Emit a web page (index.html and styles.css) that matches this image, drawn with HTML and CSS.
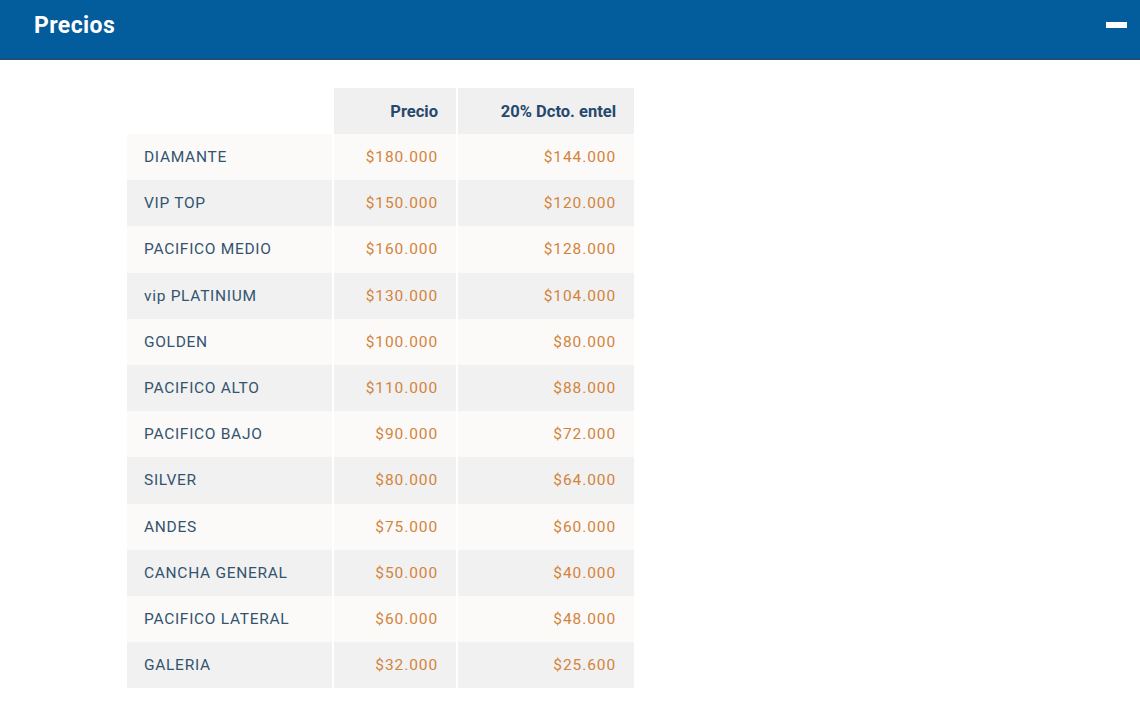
FILE: index.html
```html
<!DOCTYPE html>
<html lang="es">
<head>
<meta charset="utf-8">
<title>Precios</title>
<link rel="stylesheet" href="styles.css">
</head>
<body>
<header class="bar">
  <h2 class="bar-title">Precios</h2>
  <span class="bar-toggle" aria-label="Contraer"></span>
</header>
<section class="content">
  <table class="prices">
    <colgroup>
      <col class="col-name">
      <col class="col-price">
      <col class="col-disc">
    </colgroup>
    <thead>
      <tr><th class="blank"></th><th>Precio</th><th>20% Dcto. entel</th></tr>
    </thead>
    <tbody>
      <tr><td>DIAMANTE</td><td>$180.000</td><td>$144.000</td></tr>
      <tr><td>VIP TOP</td><td>$150.000</td><td>$120.000</td></tr>
      <tr><td>PACIFICO MEDIO</td><td>$160.000</td><td>$128.000</td></tr>
      <tr><td>vip PLATINIUM</td><td>$130.000</td><td>$104.000</td></tr>
      <tr><td>GOLDEN</td><td>$100.000</td><td>$80.000</td></tr>
      <tr><td>PACIFICO ALTO</td><td>$110.000</td><td>$88.000</td></tr>
      <tr><td>PACIFICO BAJO</td><td>$90.000</td><td>$72.000</td></tr>
      <tr><td>SILVER</td><td>$80.000</td><td>$64.000</td></tr>
      <tr><td>ANDES</td><td>$75.000</td><td>$60.000</td></tr>
      <tr><td>CANCHA GENERAL</td><td>$50.000</td><td>$40.000</td></tr>
      <tr><td>PACIFICO LATERAL</td><td>$60.000</td><td>$48.000</td></tr>
      <tr><td>GALERIA</td><td>$32.000</td><td>$25.600</td></tr>
    </tbody>
  </table>
</section>
</body>
</html>
```
FILE: styles.css
```css
html, body {
  margin: 0;
  padding: 0;
  background: #ffffff;
  font-family: Roboto, "Liberation Sans", sans-serif;
}

.bar {
  height: 58px;
  background: #035c9c;
  border-bottom: 2px solid #1d4f78;
  display: flex;
  align-items: center;
  justify-content: space-between;
  padding: 0 13px 0 34px;
}

.bar-title {
  margin: 0;
  color: #ffffff;
  font-size: 23px;
  font-weight: 700;
  letter-spacing: 0.4px;
  padding-bottom: 8px;
}

.bar-toggle {
  width: 21px;
  height: 6px;
  background: #ffffff;
  margin-bottom: 9px;
}

.content {
  padding: 28px 0 0 127px;
}

.prices {
  border-collapse: collapse;
  width: 507px;
  table-layout: fixed;
}

.col-name { width: 206px; }
.col-price { width: 124px; }
.col-disc { width: 177px; }

.prices th,
.prices td {
  box-sizing: border-box;
  border-left: 2px solid #ffffff;
  border-right: 2px solid #ffffff;
  padding: 0 18px 0 17px;
  text-align: right;
  white-space: nowrap;
}

.prices th:first-child,
.prices td:first-child {
  border-left: 0;
  text-align: left;
}

.prices th:last-child,
.prices td:last-child {
  border-right: 0;
}

.prices th {
  height: 46px;
  background: #f0f0f0;
  color: #26486d;
  font-size: 16.5px;
  font-weight: 700;
}

.prices th.blank {
  background: #ffffff;
}

.prices td {
  height: 46.2px;
  font-size: 15.5px;
  letter-spacing: 0.9px;
  color: #d3843c;
}

.prices td:first-child {
  color: #33546f;
  letter-spacing: 0.7px;
}

.prices tbody tr:nth-child(odd) td { background: #fbfaf8; }
.prices tbody tr:nth-child(even) td { background: #f1f1f1; }
```
